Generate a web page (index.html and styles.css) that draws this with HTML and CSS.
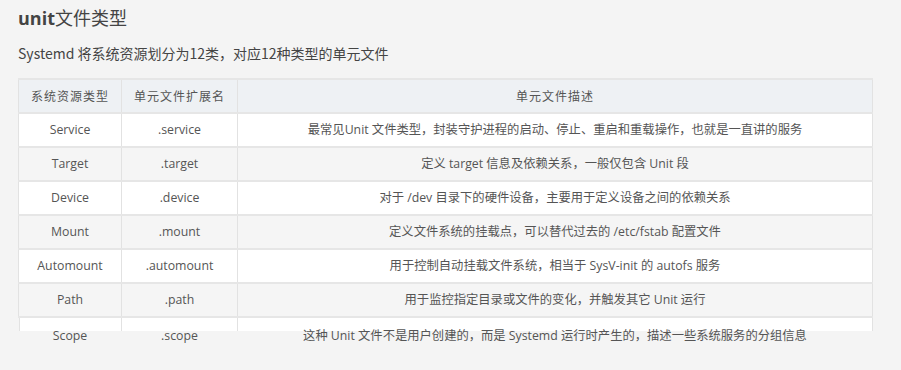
FILE: index.html
```html
<!DOCTYPE html>
<html lang="zh-CN">
<head>
<meta charset="utf-8">
<title>unit文件类型</title>
<link rel="stylesheet" href="styles.css">
</head>
<body>
<div class="page">
  <h3 class="title"><span class="title-latin">unit</span>文件类型</h3>
  <p class="lead">Systemd 将系统资源划分为12类，对应12种类型的单元文件</p>
  <table class="units">
    <thead>
      <tr><th class="c1">系统资源类型</th><th class="c2">单元文件扩展名</th><th class="c3">单元文件描述</th></tr>
    </thead>
    <tbody>
      <tr><td>Service</td><td>.service</td><td>最常见Unit 文件类型，封装守护进程的启动、停止、重启和重载操作，也就是一直讲的服务</td></tr>
      <tr><td>Target</td><td>.target</td><td>定义 target 信息及依赖关系，一般仅包含 Unit 段</td></tr>
      <tr><td>Device</td><td>.device</td><td>对于 /dev 目录下的硬件设备，主要用于定义设备之间的依赖关系</td></tr>
      <tr><td>Mount</td><td>.mount</td><td>定义文件系统的挂载点，可以替代过去的 /etc/fstab 配置文件</td></tr>
      <tr><td>Automount</td><td>.automount</td><td>用于控制自动挂载文件系统，相当于 SysV-init 的 autofs 服务</td></tr>
      <tr><td>Path</td><td>.path</td><td>用于监控指定目录或文件的变化，并触发其它 Unit 运行</td></tr>
      <tr class="clip-row"><td class="first">Scope</td><td>.scope</td><td>这种 Unit 文件不是用户创建的，而是 Systemd 运行时产生的，描述一些系统服务的分组信息</td></tr>
    </tbody>
  </table>
</div>
</body>
</html>
```

FILE: styles.css
```css
html, body {
  margin: 0;
  background: #f4f4f4;
}

body {
  font-family: "Noto Sans CJK SC", "Noto Sans", sans-serif;
  color: #555;
}

.page {
  padding: 5px 0 0 18px;
}

.title {
  margin: 0;
  font-size: 18px;
  line-height: 24px;
  font-weight: 400;
  color: #444;
}

.title-latin {
  font-family: "Open Sans", "Noto Sans CJK SC", sans-serif;
  font-weight: 700;
}

.lead {
  margin: 13px 0 0;
  font-size: 14px;
  line-height: 20px;
  color: #444;
}

.units {
  margin-top: 15px;
  width: 855px;
  border-collapse: collapse;
  font-family: "Open Sans", "Noto Sans CJK SC", sans-serif;
  font-size: 12.3px;
  color: #555;
}

.units th,
.units td {
  height: 32px;
  padding: 0;
  text-align: center;
  vertical-align: middle;
  border-top: 2px solid #e6e6e6;
  border-bottom: 2px solid #e6e6e6;
  border-left: 1px solid #e2e2e2;
  border-right: 1px solid #e2e2e2;
  line-height: 18px;
}

.units th {
  font-family: "Noto Sans CJK SC", sans-serif;
  font-size: 12px;
  font-weight: 400;
  letter-spacing: 1px;
  background: #eef1f4;
  color: #555;
}

.units .c1 { width: 102px; }
.units .c2 { width: 115px; }

.units tbody tr:nth-child(odd) td { background: #fff; }
.units tbody tr:nth-child(even) td { background: #f5f5f5; }

.units tbody tr.clip-row td {
  padding-top: 2px;
  border-left: none;
  border-right: none;
  border-bottom: none;
  background-color: transparent;
  background-image: linear-gradient(#e2e2e2, #e2e2e2), linear-gradient(#fff, #fff);
  background-size: 1px 13px, 100% 13px;
  background-position: right top, left top;
  background-repeat: no-repeat;
}

.units tbody tr.clip-row td.first {
  background-image: linear-gradient(#e2e2e2, #e2e2e2), linear-gradient(#e2e2e2, #e2e2e2), linear-gradient(#fff, #fff);
  background-size: 1px 13px, 1px 13px, 100% 13px;
  background-position: left top, right top, left top;
}

.units tbody tr.clip-row td:last-child {
  background-image: linear-gradient(#e2e2e2, #e2e2e2), linear-gradient(#fff, #fff);
  background-size: 1px 13px, 100% 13px;
  background-position: right top, left top;
}
```
